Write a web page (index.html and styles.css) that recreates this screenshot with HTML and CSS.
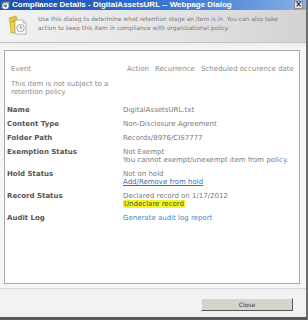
FILE: index.html
```html
<!DOCTYPE html>
<html>
<head>
<meta charset="utf-8">
<link rel="stylesheet" href="styles.css">
</head>
<body>
<div class="win">
  <div class="titlebar">
    <svg class="ie" width="9" height="9" viewBox="0 0 9 9">
      <rect x="0" y="0" width="9" height="9" fill="#2a5fc0"/>
      <circle cx="4.5" cy="4.8" r="3.2" fill="#ffffff"/>
      <circle cx="4.5" cy="4.8" r="1.6" fill="#3a8ae0"/>
      <path d="M1 6.5 Q4 1 8.5 2" stroke="#f2c030" stroke-width="1.2" fill="none"/>
    </svg>
    <span class="title">Compliance Details - DigitalAssetsURL -- Webpage Dialog</span>
    <span class="xbtn">×</span>
  </div>
  <div class="header">
    <svg class="hicon" width="22" height="22" viewBox="0 0 22 22">
      <path d="M2 4 L9 2 L12 12 L5 14 Z" fill="#e8c440" stroke="#b59318" stroke-width="0.6"/>
      <path d="M3 8 L10 7 L11 18 L4 19 Z" fill="#f0d050" stroke="#b59318" stroke-width="0.6"/>
      <path d="M8 6 L16 6 L19 9 L19 20 L8 20 Z" fill="#fdfdfd" stroke="#8a8a8a" stroke-width="0.6"/>
      <path d="M16 6 L16 9 L19 9" fill="#e6e6e6" stroke="#8a8a8a" stroke-width="0.5"/>
      <circle cx="13.5" cy="14" r="3.8" fill="#f4f4f4" stroke="#7a7a7a" stroke-width="0.6"/>
      <path d="M13.5 11.6 L13.5 14 L15.3 14" stroke="#555" stroke-width="0.6" fill="none"/>
    </svg>
    <div class="htext">Use this dialog to determine what retention stage an item is in. You can also take action to keep this item in compliance with organizational policy.</div>
  </div>
  <div class="body">
    <div class="box">
      <div class="events">
        <div class="ev-head">
          <span class="c-event">Event</span>
          <span class="c-action">Action</span>
          <span class="c-rec">Recurrence</span>
          <span class="c-date">Scheduled occurence date</span>
        </div>
        <div class="ev-row">This item is not subject to a retention policy</div>
      </div>
      <div class="details">
        <div class="lbl">Name</div>
        <div class="val">DigitalAssetsURL.txt</div>
        <div class="lbl">Content Type</div>
        <div class="val">Non-Disclosure Agreement</div>
        <div class="lbl">Folder Path</div>
        <div class="val">Records/8976/CIS7777</div>
        <div class="lbl">Exemption Status</div>
        <div class="val">Not Exempt<br>You cannot exempt/unexempt item from policy.</div>
        <div class="lbl">Hold Status</div>
        <div class="val">Not on hold<br><a class="link-u">Add/Remove from hold</a></div>
        <div class="lbl">Record Status</div>
        <div class="val">Declared record on 1/17/2012<br><span class="hl">Undeclare record</span></div>
        <div class="lbl">Audit Log</div>
        <div class="val"><a class="link">Generate audit log report</a></div>
      </div>
    </div>
  </div>
  <div class="footer">
    <button class="close">Close</button>
  </div>
</div>
</body>
</html>
```
FILE: styles.css
```css
html, body {
  margin: 0;
  padding: 0;
  background: #ffffff;
}
.win {
  width: 306px;
  height: 317px;
  border-right: 2px solid #6e6e6e;
  border-bottom: 3px solid #5a5a5a;
  background: #f4f4f4;
  display: flex;
  flex-direction: column;
  font-family: "DejaVu Sans", Verdana, sans-serif;
  overflow: hidden;
}
.titlebar {
  height: 10px;
  flex: none;
  background: linear-gradient(to right, #1b4ea8, #2d67c8 40%, #4c86d8 70%, #8ab0e6);
  display: flex;
  align-items: center;
  padding-left: 1px;
  position: relative;
}
.ie { display: block; flex: none; }
.title {
  margin-left: 2px;
  color: #ffffff;
  font-family: "Liberation Sans", Arial, sans-serif;
  font-weight: bold;
  font-size: 8px;
  line-height: 10px;
  white-space: nowrap;
}
.xbtn {
  position: absolute;
  right: 3px;
  top: 1px;
  width: 9px;
  height: 8px;
  background: #e8e8e4;
  border: 1px solid #8a8a8a;
  box-sizing: border-box;
  color: #222;
  font-size: 8px;
  line-height: 6px;
  text-align: center;
  font-weight: bold;
}
.header {
  height: 32px;
  flex: none;
  background: linear-gradient(to right, #f2f2f2, #e2e2e2 60%, #d2d2d2);
  border-bottom: 1px solid #c4c4c4;
  display: flex;
  align-items: flex-start;
}
.hicon {
  flex: none;
  margin: 4px 0 0 7px;
}
.htext {
  margin: 5px 0 0 9px;
  width: 242px;
  color: #7a7a7a;
  font-size: 5.9px;
  line-height: 9px;
}
.body {
  flex: 1;
  padding: 7px 6px 4px 4px;
  background: linear-gradient(#ececec, #f6f6f6 6px);
  border-bottom: 1px solid #d8d8d8;
  display: flex;
}
.box {
  flex: 1;
  background: #ffffff;
  border: 1px solid #a8a8a8;
  padding: 14px 0 0 2px;
  font-size: 7px;
  line-height: 8px;
}
.events {
  padding-left: 4px;
  color: #8a8a8a;
}
.ev-head {
  display: flex;
  white-space: nowrap;
}
.c-event { width: 116px; }
.c-action { width: 28px; }
.c-rec { width: 46px; }
.ev-row {
  width: 106px;
  margin-top: 7px;
}
.details {
  margin-top: 10px;
  display: grid;
  grid-template-columns: 116px 1fr;
  row-gap: 6px;
}
.lbl {
  color: #555555;
  font-weight: bold;
}
.val {
  color: #7a7a7a;
  white-space: nowrap;
}
.link-u {
  color: #3f6fa8;
  text-decoration: underline;
}
.link {
  color: #4a86c6;
}
.hl {
  background: #f4f428;
  color: #3e5a2a;
  padding: 0 1px;
}
.footer {
  height: 28px;
  flex: none;
  background: #f2f2f2;
  display: flex;
  justify-content: flex-end;
  align-items: flex-start;
}
.close {
  margin: 9px 13px 0 0;
  width: 92px;
  height: 13px;
  padding: 0;
  background: #d6d3cc;
  border: 1px solid;
  border-color: #f4f4f4 #555 #555 #f4f4f4;
  font-family: "DejaVu Sans", Verdana, sans-serif;
  font-size: 6px;
  color: #333;
}
```
